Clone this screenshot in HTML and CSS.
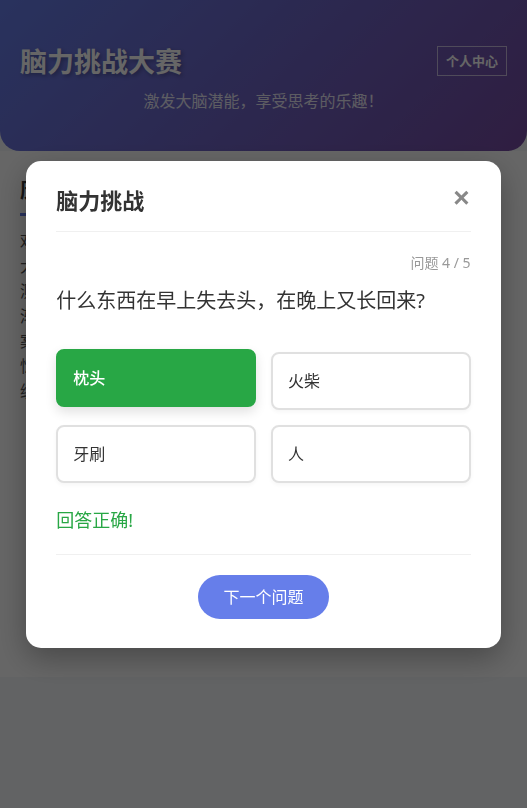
FILE: index.html
```html
<!DOCTYPE html>
<html lang="zh-CN">
<head>
  <meta charset="UTF-8">
  <meta name="viewport" content="width=device-width, initial-scale=1.0">
  <title>脑力挑战大赛</title>
  <link rel="stylesheet" href="styles.css">
</head>
<body>
  <header class="header">
    <div class="header-top">
      <h1>脑力挑战大赛</h1>
      <button class="user-btn">个人中心</button>
    </div>
    <p class="subtitle">激发大脑潜能，享受思考的乐趣！</p>
  </header>

  <main class="main">
    <h2 class="section-title">历届挑战说明</h2>
    <p class="intro">欢迎来到脑力挑战大赛！这里汇集了各种有趣的谜题和脑筋急转弯大家可以在轻松愉快的氛围中锻炼自己的思维能力和反应速度快来测试一下你的逻辑推理水平吧每一道题都经过精心设计难度是循序渐进的量力而行也没关系答错了还可以继续尝试直到找到正确的答案为止挑战成功后还能获得积分奖励和专属的荣誉称号以及更多的惊喜中间还会不定期推出限时活动排行榜中可以看到所有玩家的成绩是时候展现你真正的实力了快点开始吧！</p>
  </main>

  <!-- Question modal -->
  <div class="overlay">
    <div class="modal">
      <div class="modal-header">
        <h3>脑力挑战</h3>
        <span class="close">&times;</span>
      </div>
      <div class="counter">问题 4 / 5</div>
      <p class="question">什么东西在早上失去头，在晚上又长回来?</p>
      <div class="options">
        <div class="option correct">枕头</div>
        <div class="option">火柴</div>
        <div class="option">牙刷</div>
        <div class="option">人</div>
      </div>
      <p class="feedback">回答正确!</p>
      <div class="modal-footer">
        <button class="next-btn">下一个问题</button>
      </div>
    </div>
  </div>
</body>
</html>
```

FILE: styles.css
```css
* {
  box-sizing: border-box;
}

body {
  font-family: "Noto Sans", "Noto Sans CJK SC", sans-serif;
  background-color: #f5f7fa;
  color: #333;
  margin: 0;
  padding: 0;
}

.header {
  background: linear-gradient(135deg, #667eea 0%, #764ba2 100%);
  color: #fff;
  padding: 45px 20px 38px;
  border-radius: 0 0 20px 20px;
}

.header-top {
  display: flex;
  justify-content: space-between;
  align-items: center;
}

.header h1 {
  margin: 0;
  font-size: 27px;
  line-height: 34px;
  font-weight: bold;
  text-shadow: 2px 2px 4px rgba(0, 0, 0, 0.3);
}

.user-btn {
  font-family: inherit;
  font-size: 13px;
  font-weight: bold;
  line-height: 16px;
  color: #fff;
  background: transparent;
  border: 1px solid rgba(255, 255, 255, 0.6);
  padding: 6px 8px;
  margin-top: -3px;
}

.subtitle {
  margin: 10px 0 0;
  text-align: center;
  font-size: 16px;
  line-height: 24px;
  opacity: 0.85;
}

.main {
  background: #fff;
  min-height: 526px;
  padding: 27px 30px 0 20px;
}

.section-title {
  position: relative;
  margin: 0 0 13px;
  font-size: 20px;
  line-height: 26px;
  padding-bottom: 12px;
  color: #333;
}

.section-title::after {
  content: "";
  position: absolute;
  left: 0;
  bottom: 0;
  width: 60px;
  height: 3px;
  background: #667eea;
}

.intro {
  margin: 0;
  font-size: 16px;
  line-height: 25px;
  color: #555;
}

/* modal */
.overlay {
  position: fixed;
  inset: 0;
  background: rgba(0, 0, 0, 0.6);
  display: flex;
  justify-content: center;
  align-items: center;
}

.modal {
  width: 90%;
  max-width: 500px;
  background: #fff;
  border-radius: 15px;
  padding: 25px 30px 29px;
  box-shadow: 0 10px 30px rgba(0, 0, 0, 0.3);
}

.modal-header {
  display: flex;
  justify-content: space-between;
  align-items: center;
  padding-bottom: 17px;
  border-bottom: 1px solid #f0f0f0;
  margin-bottom: 20px;
}

.modal-header h3 {
  margin: 0;
  font-size: 22px;
  line-height: 28px;
  color: #333;
}

.close {
  font-family: "Liberation Sans", sans-serif;
  font-size: 28px;
  line-height: 28px;
  font-weight: bold;
  color: #888;
  margin: -4px 1px 0 0;
  cursor: pointer;
}

.counter {
  text-align: right;
  font-size: 14px;
  line-height: 21px;
  color: #999;
}

.question {
  margin: 12px 0 35px;
  font-size: 20px;
  line-height: 32px;
  color: #333;
}

.options {
  display: grid;
  grid-template-columns: 1fr 1fr;
  gap: 15px;
}

.option {
  border: 2px solid #e0e0e0;
  border-radius: 8px;
  padding: 15px;
  font-size: 16px;
  line-height: 24px;
  color: #333;
  background: #fff;
  box-shadow: 0 2px 4px rgba(0, 0, 0, 0.04);
  cursor: pointer;
}

.option.correct {
  background: #28a745;
  border-color: #28a745;
  color: #fff;
  font-weight: 500;
  transform: translateY(-3px);
  box-shadow: 0 5px 12px rgba(0, 0, 0, 0.12);
}

.feedback {
  margin: 24px 0 0;
  font-size: 18px;
  line-height: 27px;
  color: #28a745;
  padding-bottom: 20px;
  border-bottom: 1px solid #f0f0f0;
}

.modal-footer {
  padding-top: 20px;
  text-align: center;
}

.next-btn {
  font-family: inherit;
  font-size: 16px;
  line-height: 20px;
  color: #fff;
  background: #667eea;
  border: none;
  border-radius: 22px;
  padding: 12px 25px;
  cursor: pointer;
}
```
